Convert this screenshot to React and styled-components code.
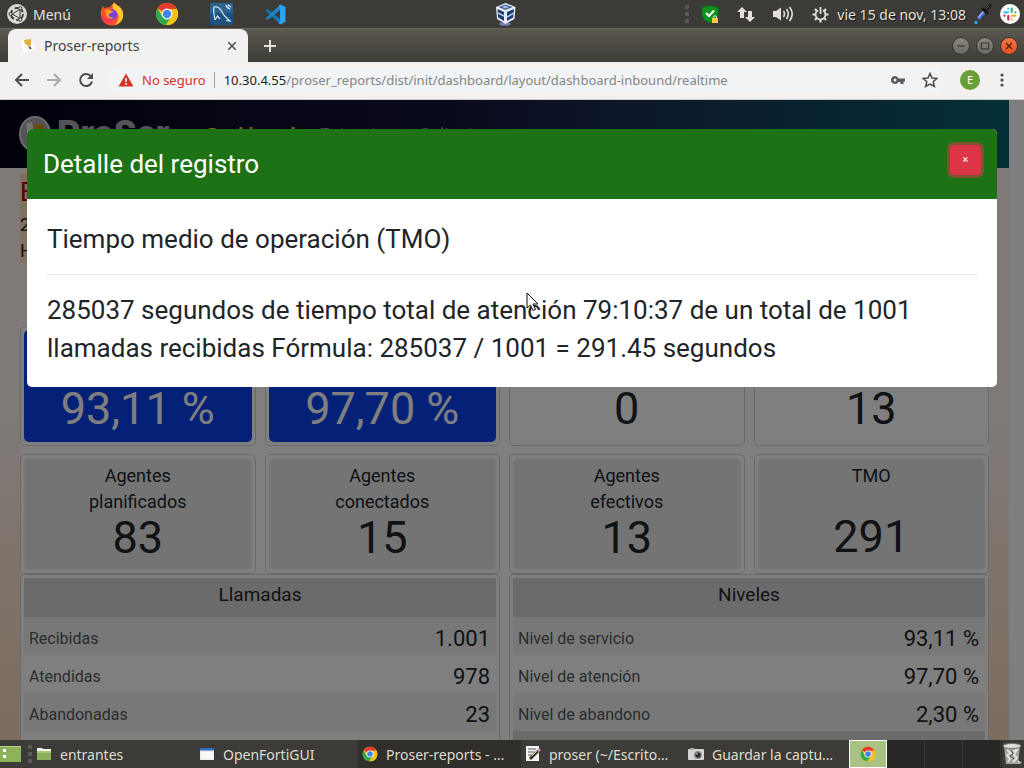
import React from 'react';
import styled, { createGlobalStyle } from 'styled-components';

const Global = createGlobalStyle`
  * { box-sizing: border-box; }
  html, body { margin: 0; padding: 0; }
  body { overflow: hidden; }
  button { border: 0; padding: 0; background: none; font: inherit; color: inherit; cursor: pointer; }
  a { color: inherit; text-decoration: none; }
  svg { display: block; flex: none; }
`;

const Desktop = styled.div`
  display: flex;
  flex-direction: column;
  height: 100vh;
  overflow: hidden;
  background: #3c3b37;
  font-family: 'Noto Sans', 'Open Sans', sans-serif;
  font-size: 14px;
`;

/* ---------- top panel ---------- */

const TopPanel = styled.header`
  display: flex;
  flex: none;
  align-items: center;
  justify-content: space-between;
  height: 28px;
  padding: 0 4px 0 7px;
  color: #e4e0d9;
  text-shadow: 1px 1px 0 #161613;
`;

const Group = styled.div`
  display: flex;
  align-items: center;
  flex: ${(p) => p.$flex || 'none'};
  justify-content: ${(p) => p.$justify || 'flex-start'};
  gap: ${(p) => p.$gap || 0}px;
`;

const MenuButton = styled.button`
  display: flex;
  align-items: center;
  gap: 6px;
`;

const IconButton = styled.button`
  display: flex;
  align-items: center;
  justify-content: center;
  flex: none;
`;

const Grip = styled.span`
  width: 4px;
  height: 18px;
  background: repeating-linear-gradient(#5b5a55 0 4px, transparent 4px 7px);
`;

/* ---------- browser chrome ---------- */

const TabStrip = styled.div`
  display: flex;
  flex: none;
  align-items: flex-end;
  height: 34px;
  border-top: 1px solid #67645a;
  padding: 0 6px 0 8px;
  background: linear-gradient(#5b584f, #3e3c38);
`;

const Tab = styled.div`
  display: flex;
  align-items: center;
  width: 240px;
  height: 33px;
  padding: 0 10px 0 12px;
  border-radius: 8px 8px 0 0;
  background: #f2f1f0;
  color: #3f4245;
`;

const TabTitle = styled.span`
  flex: 1;
  margin-left: 8px;
`;

const StripRest = styled.div`
  display: flex;
  flex: 1;
  align-items: center;
  justify-content: space-between;
  height: 33px;
  padding-left: 14px;
`;

const WindowButton = styled.button`
  display: flex;
  align-items: center;
  justify-content: center;
  width: 18px;
  height: 18px;
  border: 1px solid #33322e;
  border-radius: 50%;
  background: ${(p) => (p.$close ? 'linear-gradient(#f5774c, #e6501f)' : 'linear-gradient(#8a877e, #6b6962)')};
`;

const Toolbar = styled.div`
  display: flex;
  flex: none;
  align-items: center;
  height: 38px;
  padding: 0 20px 2px 14px;
  border-bottom: 1px solid #cfcdca;
  background: #f2f1f0;
  font-size: 13px;
`;

const Address = styled.div`
  display: flex;
  flex: 1;
  align-items: center;
  height: 28px;
  margin: 0 15px 0 13px;
  padding: 0 7px 0 11px;
  border-radius: 14px;
  background: #f1f3f4;
  color: #80868b;
`;

const Warning = styled.span`
  margin: 0 8px;
  color: #d93025;
`;

const Divider = styled.span`
  width: 1px;
  height: 16px;
  margin-right: 9px;
  background: #9aa0a6;
`;

const Url = styled.span`
  flex: 1;
  white-space: nowrap;
  b { font-weight: 400; color: #202124; }
`;

const Avatar = styled.button`
  width: 20px;
  height: 20px;
  margin-right: 20px;
  border-radius: 50%;
  background: #689f38;
  color: #fff;
  font-size: 11px;
`;

/* ---------- web page ---------- */

const Viewport = styled.main`
  position: relative;
  display: flex;
  flex: 1;
  min-height: 0;
  overflow: hidden;
  font-family: Roboto, sans-serif;
  color: #212529;
`;

const Page = styled.div`
  flex: 1;
  min-width: 0;
  background: linear-gradient(#fff4ee 0%, #fff4ee 50%, #fbd9bd 100%);
`;

const Scrollbar = styled.div`
  flex: none;
  width: 15px;
  background: #fdfdfd;
`;

const Navbar = styled.nav`
  display: flex;
  align-items: center;
  height: 68px;
  padding: 0 19px;
  gap: 24px;
  background: linear-gradient(90deg, #030318, #15153c 45%, #1a2a52 60%, #0a6070);
  font-size: 18px;
`;

const Brand = styled.a`
  display: flex;
  align-items: center;
  gap: 6px;
  min-width: 165px;
  color: #a9a9ae;
  font-size: 36px;
  font-weight: 900;
`;

const NavLink = styled.a`
  color: ${(p) => (p.$active ? '#e6d200' : '#85859a')};
  font-weight: ${(p) => (p.$active ? 700 : 400)};
`;

const Filter = styled.section`
  display: flex;
  flex-direction: column;
  width: 240px;
  height: 90px;
  margin: 5px 0 60px 20px;
  background: #fbe3c0;
  font-size: 18px;
  line-height: 26px;
  h1 {
    margin: 6px 0 7px;
    color: #b00010;
    font-size: 26px;
    font-weight: 400;
    line-height: 26px;
  }
`;

const Board = styled.section`
  display: grid;
  grid-template-columns: repeat(4, minmax(0, 1fr));
  column-gap: 9px;
  margin: 0 20px;
  padding-top: 3px;
  background: #fff;
`;

const Card = styled.article`
  height: 120px;
  margin-bottom: 8px;
  padding: 3px;
  border: 1px solid #d4d4d4;
  border-radius: 5px;
`;

const CardBody = styled.div`
  display: flex;
  flex-direction: column;
  align-items: center;
  height: 100%;
  padding: 5px 50px 10px;
  border-radius: 5px;
  background: ${(p) => ({ blue: '#0a40ee', gray: '#e8e8e8' })[p.$tone] || '#fff'};
  box-shadow: ${(p) => (p.$tone === 'gray' ? 'inset 0 0 3px #f8f8f8' : 'none')};
  color: ${(p) => (p.$tone === 'blue' ? '#fff' : '#212529')};
  font-size: 18px;
  line-height: 26px;
  text-align: center;
  strong {
    margin-top: auto;
    font-size: 45px;
    font-weight: 400;
    line-height: 46px;
    white-space: nowrap;
  }
`;

const Panel = styled.section`
  grid-column: span 2;
  margin-top: -8px;
  padding: 3px 3px 0;
  border: 1px solid #d4d4d4;
  border-radius: 4px 4px 0 0;
`;

const DataTable = styled.table`
  width: 100%;
  border-collapse: collapse;
  color: #212529;
  thead th, tfoot td {
    height: 39px;
    padding: 0 0 6px;
    background: #d6d6d6;
    font-size: 19px;
    font-weight: 400;
  }
  tbody tr { height: 38px; }
  tbody tr:nth-child(odd) { background: #f0f0f0; }
  tbody th {
    padding: 4px 5px 0;
    color: #55585c;
    font-size: 16px;
    font-weight: 400;
    text-align: left;
  }
  tbody td {
    padding: 4px 6px 0;
    font-size: 22px;
    text-align: right;
  }
`;

const Backdrop = styled.div`
  position: absolute;
  inset: 0;
  padding: 29px 27px;
  background: rgba(0, 0, 0, 0.5);
`;

const Dialog = styled.div`
  overflow: hidden;
  border-radius: 5px;
  background: #fff;
  font-size: 26px;
  line-height: 38px;
  p { margin: 0; }
  hr {
    height: 1px;
    margin: 16px 0;
    border: 0;
    background: #e5e5e5;
  }
`;

const DialogHeader = styled.div`
  display: flex;
  align-items: flex-start;
  justify-content: space-between;
  height: 70px;
  padding: 16px 16px;
  background: #1e7216;
  color: #fff;
  h2 {
    margin: 0;
    font-size: 26px;
    font-weight: 400;
    line-height: 38px;
  }
`;

const CloseButton = styled.button`
  width: 31px;
  height: 30px;
  border-radius: 4px;
  background: #dc3545;
  box-shadow: 0 0 0 3px rgba(220, 53, 69, 0.5);
  color: #fff;
  font-size: 11px;
  line-height: 30px;
`;

const DialogBody = styled.div`
  padding: 21px 20px 20px;
`;

const Pointer = styled.svg`
  position: absolute;
  left: 526px;
  top: 192px;
`;

/* ---------- bottom panel ---------- */

const Taskbar = styled.footer`
  display: flex;
  flex: none;
  align-items: center;
  height: 28px;
  background: #3c3b37;
  color: #dfdbd2;
  text-shadow: 1px 1px 0 #1c1c1a;
`;

const Task = styled.button`
  display: flex;
  flex: 0 1 163px;
  min-width: 0;
  align-items: center;
  height: 28px;
  padding: 0 4px;
  gap: 8px;
  background: ${(p) => (p.$active ? '#302f2c' : 'transparent')};
  white-space: nowrap;
`;

const Workspaces = styled.div`
  display: flex;
  flex: 1;
  align-self: stretch;
  background: #282725;
`;

const Workspace = styled.button`
  display: flex;
  align-items: center;
  justify-content: center;
  width: 38px;
  border: ${(p) => (p.$active ? '1px solid #fff' : '0')};
  border-right: 1px solid ${(p) => (p.$active ? '#fff' : '#383733')};
  background: ${(p) => (p.$active ? '#a9c284' : 'transparent')};
`;

/* ---------- drawings ---------- */

const Chrome = ({ size = 24 }) => (
  <svg width={size} height={size} viewBox="0 0 24 24">
    <circle cx="12" cy="12" r="11" fill="#fbc116" />
    <path d="M12 12 L2.5 6.5 A11 11 0 0 1 21.5 6.5 Z" fill="#e33b2e" />
    <path d="M2.5 6.5 A11 11 0 0 0 11 23 L16.5 14.5 L7.5 15 Z" fill="#2da94f" />
    <path d="M12 7 H21.8 A11 11 0 0 1 11 23 L16.5 14.5 Z" fill="#fbc116" />
    <circle cx="12" cy="12" r="5.4" fill="#fff" />
    <circle cx="12" cy="12" r="4.2" fill="#3f83f0" />
  </svg>
);

const MateLogo = () => (
  <svg width="20" height="20" viewBox="0 0 20 20">
    <circle cx="10" cy="10" r="10" fill="#dcd9d2" />
    <circle cx="10" cy="10" r="6" fill="none" stroke="#3c3b37" strokeWidth="1.8" strokeDasharray="10 2.5" />
    <path d="M5 10 L13 5.5 V14.5 Z" fill="none" stroke="#3c3b37" />
    <g fill="#dcd9d2" stroke="#3c3b37"><circle cx="3.6" cy="10" r="1.6" /><circle cx="13.3" cy="4.3" r="1.6" /><circle cx="13.3" cy="15.7" r="1.6" /></g>
  </svg>
);

const Firefox = () => (
  <svg width="24" height="24" viewBox="0 0 24 24">
    <path d="M3 4 L5 6.5 C6 5.5 8 5 9.5 5.5 L14 0.5 C16 2 16 4 17 5 L19.5 4 C24 9 24.5 16 20 20.5 C15.5 25 7 24.5 3 19 C-.5 14 .5 8 3 4Z" fill="#ff502f" />
    <path d="M14 0.5 C16 3 22 5 23 11 C24 17 20 22 15 23 C21 16 19 11 14.5 9 C12 6 12 3 14 .5Z" fill="#ffc928" />
    <path d="M2 11 C4 16 8 19 14 18 C11 23 4 22 2 17Z" fill="#ff3652" />
    <circle cx="12" cy="12.5" r="5.3" fill="#7840d6" />
    <path d="M5 8 C8 7 11 8 14 10 C11 10 10 12 8.5 12.5 C9 15 12 16 14 15 C12 18 7 17 6 13Z" fill="#ff9a1d" />
  </svg>
);

const Workbench = () => (
  <svg width="23" height="22" viewBox="0 0 23 22">
    <rect width="23" height="22" rx="1" fill="#1c527f" />
    <rect width="23" height="10" fill="#2b6492" />
    <path d="M5 17 C4 12 3 7 4 4 C8 3 11 6 12.500 10 C14 13 17 15 20 18 L16 17.500" fill="none" stroke="#dce8f0" strokeWidth="1.200" />
    <path d="M5 17 L7.500 13 L10 16" fill="none" stroke="#dce8f0" strokeWidth="1.200" />
    <path d="M16 2 Q17 5 20 6 M18 2 L21 4" fill="none" stroke="#dce8f0" strokeWidth="1.500" />
  </svg>
);

const VsCode = () => (
  <svg width="22" height="21" viewBox="0 0 22 21">
    <path d="M1.500 6.500 L3.500 5 L16 15 V20 Z" fill="#1478bd" />
    <path d="M1.500 14.500 L3.500 16 L16 6 V1 Z" fill="#1a86d0" />
    <path d="M16 0.500 L21.500 3 V18 L16 20.500 L14.500 19 L16 17 V4 L14.500 2Z" fill="#2da4f0" />
  </svg>
);

const VirtualBox = () => (
  <svg width="22" height="24" viewBox="0 0 22 24">
    <ellipse cx="10" cy="22" rx="6" ry="1.800" fill="#7087b7" />
    <path d="M10.500 1 L20.500 5 L19.500 17 L10.500 22 L2 17 L1 5 Z" fill="#e6edf8" />
    <path d="M10.500 2.500 L17.500 5 L10.500 8 L3.500 5Z" fill="#436096" />
    <path d="M2.500 7 L9 10 V19 L3.200 15.500Z M12 10 L19 7 L18.200 15.500 L12 19Z" fill="#1d3c72" />
    <path d="M3 11 L9 14 M12 15 L19 11" stroke="#b7c8e6" strokeWidth="1.500" />
    <path d="M7 5 L10.500 3.500 L14 5 L10.500 6.500Z" fill="#a8bcdf" />
  </svg>
);

const Shield = () => (
  <svg width="18" height="19" viewBox="0 0 18 19">
    <path d="M1 2 Q6 2 9 .5 Q12 2 17 2 V9 Q17 15 9 18 Q1 15 1 9Z" fill="#0e9220" stroke="#0a6d18" />
    <path d="M5 8 L8 11 L13 5.500" fill="none" stroke="#fff" strokeWidth="2" />
    <rect x="11" y="13" width="6" height="5" fill="#fcc83a" />
    <path d="M12.500 13 V11.500 Q14 10 15.500 11.500 V13" fill="none" stroke="#eee" />
  </svg>
);

const Network = () => (
  <svg width="18" height="17" viewBox="0 0 18 17" fill="#e4e0d9">
    <path d="M5 1 L10 6 H7 V12 H3 V6 H0Z M13 16 L8 11 H11 V5 H15 V11 H18Z" />
  </svg>
);

const Volume = () => (
  <svg width="21" height="16" viewBox="0 0 21 16">
    <path d="M0 5 H3 L8 1.500 V14.500 L3 11 H0Z" fill="#e4e0d9" />
    <path d="M10.500 5 Q12.500 8 10.500 11 M13.500 3 Q17 8 13.500 13 M16.500 1 Q22 8 16.500 15" fill="none" stroke="#e4e0d9" strokeWidth="1.600" />
  </svg>
);

const PowerGear = () => (
  <svg width="17" height="17" viewBox="0 0 17 17" fill="none" stroke="#e4e0d9">
    <path d="M6 4.200 A5 5 0 1 0 11 4.200" strokeWidth="1.800" />
    <path d="M8.500 1 V8" strokeWidth="1.800" />
    <path d="M3 3 L4.700 4.700 M14 3 L12.300 4.700 M0.500 8.500 H3 M14 8.500 H16.500 M3 14 L4.700 12.300 M14 14 L12.300 12.300 M8.500 14 V16.500" strokeWidth="2.200" />
  </svg>
);

const Picker = () => (
  <svg width="18" height="21" viewBox="0 0 18 21">
    <path d="M4 15 L10 8" stroke="#4169dd" strokeWidth="3.500" />
    <path d="M4.500 13.500 L9.500 7.500" stroke="#a7baf4" strokeWidth="1.200" />
    <path d="M9 5 L13 9 M11 7 L16 1.500" stroke="#171719" strokeWidth="3" strokeLinecap="round" />
    <path d="M12 5 L15 2" stroke="#62636a" />
    <circle cx="2" cy="18.500" r="1.600" fill="#20b8ff" />
  </svg>
);

const Slack = () => (
  <svg width="20" height="20" viewBox="0 0 20 20">
    <circle cx="10" cy="10" r="10" fill="#fff" />
    <g strokeWidth="2.200" strokeLinecap="round">
      <path d="M4.500 8.300 H8 M8.300 4.600 V4.500" stroke="#36c5f0" />
      <path d="M11.700 4.500 V8 M15.400 8.300 H15.500" stroke="#2eb67d" />
      <path d="M12 11.700 H15.500 M11.700 15.400 V15.500" stroke="#ecb22e" />
      <path d="M8.300 12 V15.500 M4.500 11.700 H4.600" stroke="#e01e5a" />
    </g>
  </svg>
);

const Favicon = () => (
  <svg width="16" height="16" viewBox="0 0 16 16">
    <path d="M1 4 L4 2 L8 14 L4 15Z" fill="#fff" />
    <path d="M4 2 L11 1 L12 5 L9 10 L7.500 7 L5 6Z" fill="#e4ad3f" />
    <path d="M11 2 L15 9 L9 15 L11 8Z" fill="#fff" />
    <path d="M9.500 9 L11 11" stroke="#394048" strokeWidth="1.500" />
  </svg>
);

const SiteLogo = () => (
  <svg width="32" height="36" viewBox="0 0 32 36">
    <ellipse cx="16" cy="18" rx="15" ry="17" fill="#a8a8ac" stroke="#d4d4d8" strokeWidth="2" />
    <path d="M14 8 H24 L28 17 L21 27 L17 19Z" fill="#cf9525" />
    <path d="M7 8 L13 6 L17 24 L10 29Z" fill="#e8e8ea" />
  </svg>
);

const Folder = () => (
  <svg width="16" height="14" viewBox="0 0 16 14"><path d="M1 1 H6 L7 2 H15 V6 H1Z" fill="#f2f2ea" /><path d="M1 4 H15 V13 H1Z" fill="#8bb158" /><path d="M1 4 H15 V6 H1Z" fill="#a5c973" /></svg>
);

const WindowIcon = () => (
  <svg width="16" height="12" viewBox="0 0 16 12"><rect x="1" width="14" height="12" fill="#e9e9e7" /><rect x="1" width="14" height="2.500" fill="#2f6dc6" /><rect x="2" y="4" width="12" height="7" fill="#f8f8f6" /></svg>
);

const Editor = () => (
  <svg width="16" height="16" viewBox="0 0 16 16"><rect width="13" height="15" x="1" fill="#f5f5f3" /><path d="M3 3 H11 M3 6 H9 M3 9 H7" stroke="#555" strokeWidth="1.200" /><path d="M5 13 L13 5" stroke="#35342a" strokeWidth="3" /><path d="M7 10 L12 5" stroke="#dfc25b" /><path d="M13 5 L15 3" stroke="#d887c4" strokeWidth="3" /></svg>
);

const Camera = () => (
  <svg width="16" height="14" viewBox="0 0 16 14"><rect y="2" width="16" height="11" rx="1" fill="#d6d6d2" /><rect x="2" y="1" width="4" height="2" fill="#aaa" /><circle cx="10" cy="8" r="4" fill="#8f8f8c" /><circle cx="10" cy="8" r="2.600" fill="#24282c" /><circle cx="9" cy="7" r="1" fill="#8ba0b4" /></svg>
);

const Trash = () => (
  <svg width="22" height="22" viewBox="0 0 22 22"><path d="M2 3 H18 L16 21 H4Z" fill="#a3a39d" /><ellipse cx="10" cy="3" rx="9" ry="2.500" fill="#dededa" stroke="#777" /><path d="M5 7 L9 10 L5 12 L8 16 L6 19 M11 8 L15 7 L12 12 L15 15 L11 19" fill="none" stroke="#e4e4df" strokeWidth="1.800" /><path d="M9 7 L11 11 L8 13 L12 16" fill="none" stroke="#5a5a56" /><path d="M16 17 L20 20 L16 21Z" fill="#c9c9c4" /></svg>
);

const ShowDesktop = () => (
  <svg width="21" height="16" viewBox="0 0 21 16"><rect width="21" height="16" fill="#8cb35a" /><rect width="21" height="1" fill="#b5d38c" /><path d="M3 3 H6 V6 H3Z M3 9 H6 V12 H3Z" fill="#fff" /></svg>
);

const Line = ({ d, size = 16, color = '#4a4d51', width = 2 }) => (
  <svg width={size} height={size} viewBox="0 0 16 16" fill="none" stroke={color} strokeWidth={width}>
    <path d={d} />
  </svg>
);

/* ---------- data ---------- */

const cards = [
  { id: 'servicio', value: '93,11 %', tone: 'blue' },
  { id: 'atencion', value: '97,70 %', tone: 'blue' },
  { id: 'cola', value: '0' },
  { id: 'llamada', value: '13' },
  { id: 'planificados', label: 'Agentes planificados', value: '83', tone: 'gray' },
  { id: 'conectados', label: 'Agentes conectados', value: '15', tone: 'gray' },
  { id: 'efectivos', label: 'Agentes efectivos', value: '13', tone: 'gray' },
  { id: 'tmo', label: 'TMO', value: '291', tone: 'gray' },
];

const calls = [['Recibidas', '1.001'], ['Atendidas', '978'], ['Abandonadas', '23']];
const levels = [['Nivel de servicio', '93,11 %'], ['Nivel de atención', '97,70 %'], ['Nivel de abandono', '2,30 %']];

const SummaryTable = ({ title, rows, children }) => (
  <Panel>
    <DataTable>
      <thead><tr><th colSpan="2">{title}</th></tr></thead>
      <tbody>
        {rows.map(([name, value]) => (
          <tr key={name}><th scope="row">{name}</th><td>{value}</td></tr>
        ))}
      </tbody>
      {children}
    </DataTable>
  </Panel>
);

export default function App() {
  return (
    <Desktop>
      <Global />
      <TopPanel>
        <Group $flex="0 1 488px" $gap="29">
          <MenuButton><MateLogo />Menú</MenuButton>
          <Group $gap="31">
            <IconButton aria-label="Firefox"><Firefox /></IconButton>
            <IconButton aria-label="Chrome"><Chrome /></IconButton>
            <IconButton aria-label="MySQL Workbench"><Workbench /></IconButton>
            <IconButton aria-label="Visual Studio Code"><VsCode /></IconButton>
          </Group>
        </Group>
        <IconButton aria-label="VirtualBox"><VirtualBox /></IconButton>
        <Group $flex="1" $justify="flex-end" $gap="8">
          <Group $gap="18">
            <Group $gap="12"><Grip /><Shield /></Group>
            <Network />
            <Volume />
            <PowerGear />
          </Group>
          <span>vie 15 de nov, 13:08</span>
          <Picker />
          <Slack />
        </Group>
      </TopPanel>

      <TabStrip>
        <Tab>
          <Favicon />
          <TabTitle>Proser-reports</TabTitle>
          <IconButton aria-label="Cerrar pestaña"><Line size={12} d="M3 3 L13 13 M13 3 L3 13" /></IconButton>
        </Tab>
        <StripRest>
          <IconButton aria-label="Nueva pestaña"><Line color="#e2dfd8" d="M8 2 V14 M2 8 H14" /></IconButton>
          <Group $gap="6">
            <WindowButton aria-label="Minimizar"><Line size={12} width={1.5} color="#33322e" d="M3 8 H13" /></WindowButton>
            <WindowButton aria-label="Maximizar"><Line size={12} width={1.5} color="#33322e" d="M3 4 H13 V12 H3Z" /></WindowButton>
            <WindowButton $close aria-label="Cerrar"><Line size={12} width={2} color="#5b2311" d="M4 4 L12 12 M12 4 L4 12" /></WindowButton>
          </Group>
        </StripRest>
      </TabStrip>

      <Toolbar>
        <Group $gap="16">
          <IconButton aria-label="Atrás"><Line d="M15 8 H2 M8 2 L2 8 L8 14" /></IconButton>
          <IconButton aria-label="Adelante"><Line color="#a7a8aa" d="M1 8 H14 M8 2 L14 8 L8 14" /></IconButton>
          <IconButton aria-label="Recargar">
            <svg width="16" height="16" viewBox="0 0 16 16"><path d="M13 4.500 A6 6 0 1 0 14 9.500" fill="none" stroke="#4a4d51" strokeWidth="2" /><path d="M15 1 V7 H9Z" fill="#4a4d51" /></svg>
          </IconButton>
        </Group>
        <Address>
          <svg width="16" height="14" viewBox="0 0 16 14"><path d="M8 0.500 L15.500 13.500 H0.500Z" fill="#d93025" /><path d="M8 5 V9 M8 10 V12" stroke="#fff" strokeWidth="1.500" /></svg>
          <Warning>No seguro</Warning>
          <Divider />
          <Url><b>10.30.4.55</b>/proser_reports/dist/init/dashboard/layout/dashboard-inbound/realtime</Url>
          <Group $gap="17">
            <IconButton aria-label="Contraseñas">
              <svg width="14" height="8" viewBox="0 0 14 8"><path fillRule="evenodd" d="M4 0 A4 4 0 1 0 7.500 6 H9.500 V8 H12.500 V5.500 H14 V2.500 H7.500 A4 4 0 0 0 4 0Z M4 2.500 A1.500 1.500 0 1 1 4 5.500 A1.500 1.500 0 1 1 4 2.500Z" fill="#55595e" /></svg>
            </IconButton>
            <IconButton aria-label="Favorito"><Line width={1.5} d="M8 1.500 L10 6 L15 6.400 L11.200 9.700 L12.400 14.500 L8 12 L3.600 14.500 L4.800 9.700 L1 6.400 L6 6Z" /></IconButton>
          </Group>
        </Address>
        <Group>
          <Avatar>E</Avatar>
          <IconButton aria-label="Menú del navegador">
            <svg width="4" height="14" viewBox="0 0 4 14" fill="#4a4d51"><circle cx="2" cy="2" r="1.600" /><circle cx="2" cy="7" r="1.600" /><circle cx="2" cy="12" r="1.600" /></svg>
          </IconButton>
        </Group>
      </Toolbar>

      <Viewport>
        <Page>
          <Navbar>
            <Brand href="#"><SiteLogo />ProSer</Brand>
            <NavLink href="#" $active>Dashboard</NavLink>
            <NavLink href="#">Entrantes</NavLink>
            <NavLink href="#">Salientes</NavLink>
          </Navbar>
          <Filter>
            <h1>E</h1>
            <span>2</span>
            <span>H</span>
          </Filter>
          <Board>
            {cards.map((c) => (
              <Card key={c.id}>
                <CardBody $tone={c.tone}>
                  {c.label && <span>{c.label}</span>}
                  <strong>{c.value}</strong>
                </CardBody>
              </Card>
            ))}
            <SummaryTable title="Llamadas" rows={calls} />
            <SummaryTable title="Niveles" rows={levels}>
              <tfoot><tr><td colSpan="2" /></tr></tfoot>
            </SummaryTable>
          </Board>
        </Page>
        <Scrollbar />
        <Backdrop>
          <Dialog role="dialog" aria-labelledby="dialog-title">
            <DialogHeader>
              <h2 id="dialog-title">Detalle del registro</h2>
              <CloseButton aria-label="Cerrar">×</CloseButton>
            </DialogHeader>
            <DialogBody>
              <p>Tiempo medio de operación (TMO)</p>
              <hr />
              <p>
                285037 segundos de tiempo total de atención 79:10:37 de un total de 1001 llamadas
                recibidas Fórmula: 285037 / 1001 = 291.45 segundos
              </p>
            </DialogBody>
          </Dialog>
        </Backdrop>
        <Pointer width="13" height="20" viewBox="0 0 13 20">
          <path d="M1 1 V16 L4.500 13 L7 18.500 L9.500 17.500 L7 12 H12Z" fill="#fff" stroke="#111" />
        </Pointer>
      </Viewport>

      <Taskbar>
        <Group $gap="7">
          <IconButton aria-label="Mostrar escritorio"><ShowDesktop /></IconButton>
          <Grip />
        </Group>
        <Group $flex="0 1 817px">
          <Task><Folder /><span>entrantes</span></Task>
          <Task><WindowIcon /><span>OpenFortiGUI</span></Task>
          <Task $active><Chrome size={16} /><span>Proser-reports - …</span></Task>
          <Task><Editor /><span>proser (~/Escrito…</span></Task>
          <Task><Camera /><span>Guardar la captu…</span></Task>
        </Group>
        <Workspaces>
          <Workspace $active aria-label="Área de trabajo 1"><Chrome size={16} /></Workspace>
          <Workspace aria-label="Área de trabajo 2" />
          <Workspace aria-label="Área de trabajo 3" />
          <Workspace aria-label="Área de trabajo 4" />
        </Workspaces>
        <IconButton aria-label="Papelera"><Trash /></IconButton>
      </Taskbar>
    </Desktop>
  );
}
